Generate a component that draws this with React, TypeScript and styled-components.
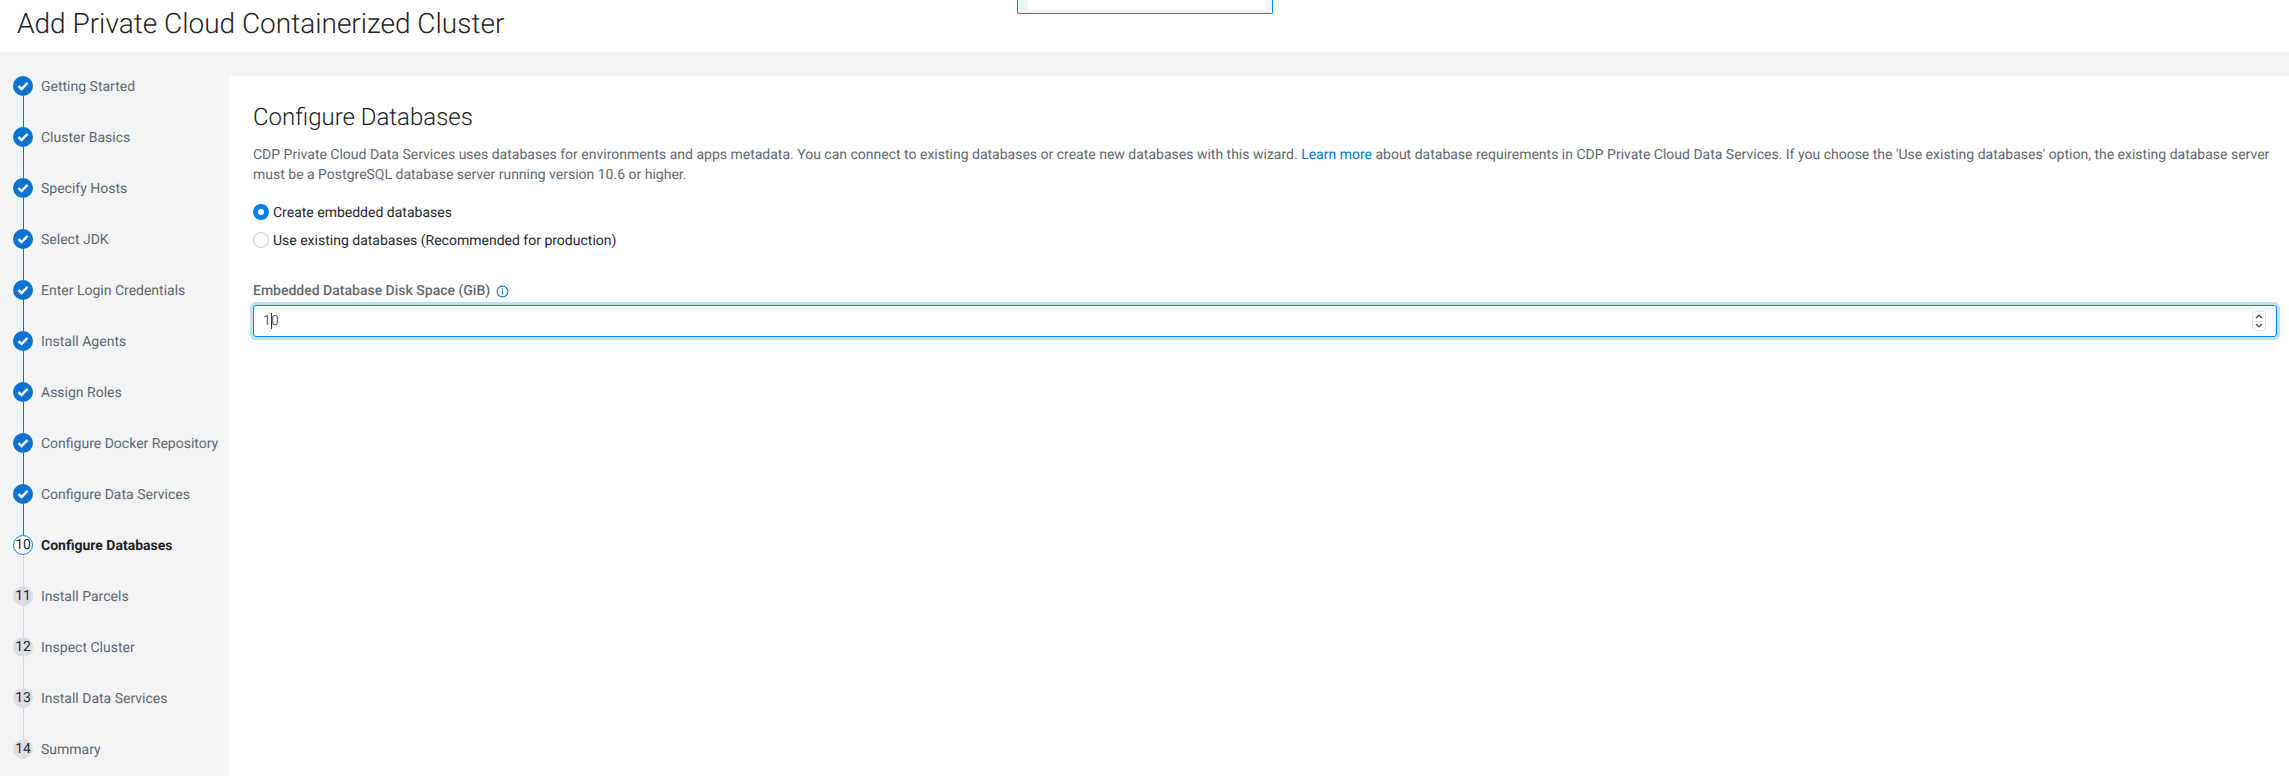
import React from "react";
import styled, { createGlobalStyle } from "styled-components";

const GlobalStyle = createGlobalStyle`
  html, body {
    margin: 0;
    padding: 0;
    height: 100%;
    background: #f3f4f6;
    font-family: Roboto, "Liberation Sans", sans-serif;
    text-rendering: geometricPrecision;
    overflow: hidden;
  }
  #root {
    height: 100%;
  }
`;

const steps = [
  "Getting Started",
  "Cluster Basics",
  "Specify Hosts",
  "Select JDK",
  "Enter Login Credentials",
  "Install Agents",
  "Assign Roles",
  "Configure Docker Repository",
  "Configure Data Services",
  "Configure Databases",
  "Install Parcels",
  "Inspect Cluster",
  "Install Data Services",
  "Summary",
];
const currentStep = 9;

type StepState = "done" | "current" | "todo";

const App: React.FC = () => {
  return (
    <Page>
      <GlobalStyle />
      <Header>
        <Title>Add Private Cloud Containerized Cluster</Title>
        <PopoverEdge>
          <PopoverInner />
        </PopoverEdge>
      </Header>
      <Body>
        <Sidebar>
          {steps.map((name, i) => {
            const state: StepState = i < currentStep ? "done" : i === currentStep ? "current" : "todo";
            return (
              <Step key={name}>
                <Marker>
                  <Circle $state={state}>
                    {state === "done" ? (
                      <svg width="12" height="10" viewBox="0 0 12 10">
                        <path d="M1.4 5.2 L4.5 8 L10.6 1.8" fill="none" stroke="#fff" strokeWidth="2.4" />
                      </svg>
                    ) : (
                      i + 1
                    )}
                  </Circle>
                  {i < steps.length - 1 && <Connector $done={i < currentStep} />}
                </Marker>
                <StepName $state={state}>{name}</StepName>
              </Step>
            );
          })}
        </Sidebar>
        <Content>
          <Heading>Configure Databases</Heading>
          <Description>
            CDP Private Cloud Data Services uses databases for environments and apps metadata. You can connect to
            existing databases or create new databases with this wizard. <Link>Learn more</Link> about database
            requirements in CDP Private Cloud Data Services. If you choose the 'Use existing databases' option, the
            existing database server must be a PostgreSQL database server running version 10.6 or higher.
          </Description>
          <RadioGroup>
            <RadioRow>
              <Radio $checked />
              <RadioLabel>Create embedded databases</RadioLabel>
            </RadioRow>
            <RadioRow>
              <Radio />
              <RadioLabel>Use existing databases (Recommended for production)</RadioLabel>
            </RadioRow>
          </RadioGroup>
          <FieldLabel>
            Embedded Database Disk Space (GiB)
            <svg width="13" height="13" viewBox="0 0 13 13">
              <circle cx="6.5" cy="6.5" r="5.4" fill="none" stroke="#0a7ad8" strokeWidth="1.1" />
              <rect x="5.9" y="5.6" width="1.2" height="3.9" fill="#0a7ad8" />
              <rect x="5.9" y="3.4" width="1.2" height="1.3" fill="#0a7ad8" />
            </svg>
          </FieldLabel>
          <NumberField>
            <FieldValue>
              1<Caret />0
            </FieldValue>
            <Spinner>
              <SpinButton>
                <svg width="8" height="5" viewBox="0 0 8 5">
                  <path d="M1 4 L4 1 L7 4" fill="none" stroke="#444" strokeWidth="1.2" />
                </svg>
              </SpinButton>
              <SpinButton>
                <svg width="8" height="5" viewBox="0 0 8 5">
                  <path d="M1 1 L4 4 L7 1" fill="none" stroke="#444" strokeWidth="1.2" />
                </svg>
              </SpinButton>
            </Spinner>
          </NumberField>
        </Content>
      </Body>
    </Page>
  );
};

export default App;

const Page = styled.div`
  height: 100%;
  display: flex;
  flex-direction: column;
  overflow: hidden;
`;

const Header = styled.header`
  position: relative;
  flex: 0 0 52px;
  background: #fff;
  display: flex;
  align-items: center;
  padding-left: 17px;
`;

const Title = styled.h1`
  margin: 0 0 6px;
  font-size: 28px;
  font-weight: 300;
  color: #1f2328;
`;

const PopoverEdge = styled.div`
  position: absolute;
  top: 0;
  left: 1017px;
  width: 256px;
  height: 14px;
  box-sizing: border-box;
  border: 1.5px solid #0a86f0;
  border-top: none;
  border-radius: 0 0 2px 2px;
  background: #ecf5fd;
  padding: 0 6px 3px 10px;
`;

const PopoverInner = styled.div`
  height: 100%;
  background: #fff;
`;

const Body = styled.div`
  flex: 1;
  display: flex;
  min-height: 0;
`;

const Sidebar = styled.nav`
  flex: 0 0 229px;
  box-sizing: border-box;
  padding: 24px 0 0 13px;
  background: #f3f4f6;
`;

const Step = styled.div`
  display: flex;
  height: 51px;
`;

const Marker = styled.div`
  width: 20px;
  display: flex;
  flex-direction: column;
  align-items: center;
`;

const Circle = styled.div<{ $state: StepState }>`
  flex: 0 0 20px;
  width: 20px;
  box-sizing: border-box;
  border-radius: 50%;
  display: flex;
  align-items: center;
  justify-content: center;
  font-size: 14px;
  color: #24292e;
  background: ${(p) => (p.$state === "done" ? "#0a72d1" : p.$state === "current" ? "#fff" : "#dcdee1")};
  border: ${(p) => (p.$state === "current" ? "1px solid #1b87e6" : "none")};
`;

const Connector = styled.div<{ $done: boolean }>`
  flex: 1;
  width: 1px;
  margin-left: 1px;
  background: ${(p) => (p.$done ? "#0a72d1" : "#d5d7da")};
`;

const StepName = styled.div<{ $state: StepState }>`
  margin-left: 8px;
  padding-top: 1px;
  line-height: 20px;
  font-size: 14px;
  white-space: nowrap;
  font-weight: ${(p) => (p.$state === "current" ? 700 : 400)};
  color: ${(p) => (p.$state === "current" ? "#1f2328" : "#5f6972")};
`;

const Content = styled.main`
  flex: 1;
  margin-top: 24px;
  background: #fff;
  padding: 25px 12px 0 24px;
`;

const Heading = styled.h2`
  margin: 0 0 12px;
  font-size: 24px;
  line-height: 32px;
  font-weight: 300;
  color: #1f2328;
`;

const Description = styled.p`
  margin: 0 0 19px;
  font-size: 14px;
  line-height: 20px;
  color: #5f6972;
`;

const Link = styled.a`
  color: #0a72d1;
`;

const RadioGroup = styled.div`
  display: flex;
  flex-direction: column;
  gap: 12px;
  margin-bottom: 33px;
`;

const RadioRow = styled.label`
  display: flex;
  align-items: center;
  height: 16px;
  gap: 4px;
`;

const Radio = styled.span<{ $checked?: boolean }>`
  width: 16px;
  height: 16px;
  box-sizing: border-box;
  border-radius: 50%;
  background: #fff;
  border: ${(p) => (p.$checked ? "5px solid #0a7df0" : "1px solid #c9cccf")};
`;

const RadioLabel = styled.span`
  padding-top: 1px;
  font-size: 14px;
  color: #24292e;
`;

const FieldLabel = styled.div`
  display: flex;
  align-items: center;
  gap: 6px;
  height: 20px;
  font-size: 14px;
  font-weight: 500;
  color: #5f6972;
  margin-bottom: 4px;
`;

const NumberField = styled.div`
  height: 32px;
  box-sizing: border-box;
  display: flex;
  align-items: center;
  justify-content: space-between;
  padding: 0 10px 0 9px;
  border: 1px solid #0a86f5;
  border-radius: 3px;
  box-shadow: 0 0 0 3px #bde0fb;
  font-size: 14px;
  color: #5f6972;
`;

const FieldValue = styled.div`
  display: flex;
  align-items: center;
`;

const Caret = styled.span`
  width: 1px;
  height: 16px;
  margin-right: -1px;
  background: #333;
`;

const Spinner = styled.div`
  display: flex;
  flex-direction: column;
  width: 12px;
  height: 18px;
  border: 1px solid #e2e2e2;
  border-radius: 4px;
  overflow: hidden;
`;

const SpinButton = styled.div`
  flex: 1;
  display: flex;
  align-items: center;
  justify-content: center;
  & + & {
    border-top: 1px solid #e2e2e2;
  }
`;
